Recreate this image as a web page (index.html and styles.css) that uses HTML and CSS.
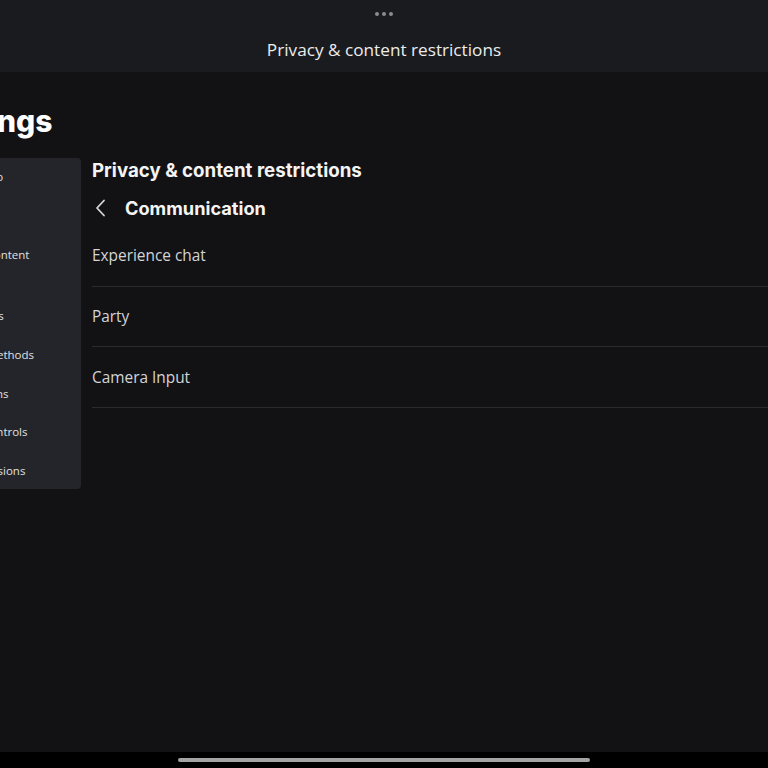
FILE: index.html
```html
<!DOCTYPE html>
<html>
<head>
<meta charset="utf-8">
<link rel="stylesheet" href="styles.css">
</head>
<body>
<div class="screen">
  <header class="topbar">
    <div class="dots"><span></span><span></span><span></span></div>
    <div class="top-title">Privacy &amp; content restrictions</div>
  </header>
  <main class="page">
    <div class="shift">
      <h1 class="settings-title">Settings</h1>
      <div class="layout">
        <nav class="sidebar">
          <div class="nav-item">Account info</div>
          <div class="nav-item">Security</div>
          <div class="nav-item two-line">Privacy &amp; content<br>restrictions</div>
          <div class="nav-item">Notifications</div>
          <div class="nav-item">Payment methods</div>
          <div class="nav-item">Subscriptions</div>
          <div class="nav-item">Parental controls</div>
          <div class="nav-item">App permissions</div>
        </nav>
        <section class="content">
          <h2 class="section-title">Privacy &amp; content restrictions</h2>
          <div class="sub-head">
            <svg class="back" width="14" height="18" viewBox="0 0 14 18"><path d="M10 1.5 L3 9 L10 16.5" fill="none" stroke="#d8d8d8" stroke-width="1.8" stroke-linecap="round" stroke-linejoin="round"/></svg>
            <span class="sub-title">Communication</span>
          </div>
          <ul class="rows">
            <li class="row">Experience chat</li>
            <li class="row">Party</li>
            <li class="row">Camera Input</li>
          </ul>
        </section>
      </div>
    </div>
  </main>
  <footer class="home-strip"><div class="home-bar"></div></footer>
</div>
</body>
</html>
```
FILE: styles.css
```css
html, body {
  margin: 0;
  padding: 0;
  background: #121215;
  overflow: hidden;
}
.screen {
  width: 768px;
  height: 768px;
  display: flex;
  flex-direction: column;
  font-family: "Open Sans", "Noto Sans", sans-serif;
  color: #e6e6e6;
  overflow: hidden;
}
.topbar {
  height: 72px;
  flex: none;
  background: #1a1b1e;
  display: flex;
  flex-direction: column;
  align-items: center;
}
.dots {
  display: flex;
  gap: 3px;
  margin-top: 12px;
}
.dots span {
  width: 4px;
  height: 4px;
  border-radius: 50%;
  background: #8c8c90;
}
.top-title {
  margin-top: 22px;
  font-size: 17.2px;
  line-height: 24px;
  color: #ececec;
}
.page {
  flex: 1;
  overflow: hidden;
}
.shift {
  margin-left: -160px;
}
.settings-title {
  margin: 0;
  padding: 31px 0 0 89px;
  font-family: "Inter", sans-serif;
  font-weight: 800;
  font-size: 30px;
  line-height: 36px;
  color: #ffffff;
}
.layout {
  display: flex;
  margin-top: 19px;
}
.sidebar {
  width: 241px;
  flex: none;
  height: 331px;
  box-sizing: border-box;
  background: #23252b;
  border-radius: 0 4px 4px 0;
  padding: 10px 0 0 96px;
  overflow: hidden;
}
.nav-item {
  font-size: 11.5px;
  line-height: 18px;
  color: #e0e0e0;
  margin-bottom: 20.7px;
  white-space: nowrap;
}
.nav-item.two-line {
  line-height: 20px;
  margin-bottom: 22px;
}
.content {
  flex: 1;
  margin-left: 11px;
}
.section-title {
  margin: 0;
  padding-top: 0;
  font-family: "Inter", sans-serif;
  font-weight: 700;
  font-size: 18.7px;
  line-height: 26px;
  color: #f4f4f4;
}
.sub-head {
  display: flex;
  align-items: center;
  margin-top: 11px;
  height: 26px;
}
.back {
  margin-left: 2px;
  flex: none;
}
.sub-title {
  margin-left: 17px;
  font-family: "Inter", sans-serif;
  font-weight: 700;
  font-size: 18.2px;
  line-height: 26px;
  color: #f4f4f4;
}
.rows {
  list-style: none;
  margin: 5px 0 0;
  padding: 0;
}
.row {
  height: 60.7px;
  box-sizing: border-box;
  border-bottom: 1px solid #2a2b30;
  display: flex;
  align-items: center;
  font-size: 15.4px;
  color: #d4d4d6;
}
.home-strip {
  height: 16px;
  flex: none;
  background: #000;
  display: flex;
  justify-content: center;
  align-items: center;
}
.home-bar {
  width: 412px;
  height: 4px;
  border-radius: 2px;
  background: #a4a4a4;
}
```
